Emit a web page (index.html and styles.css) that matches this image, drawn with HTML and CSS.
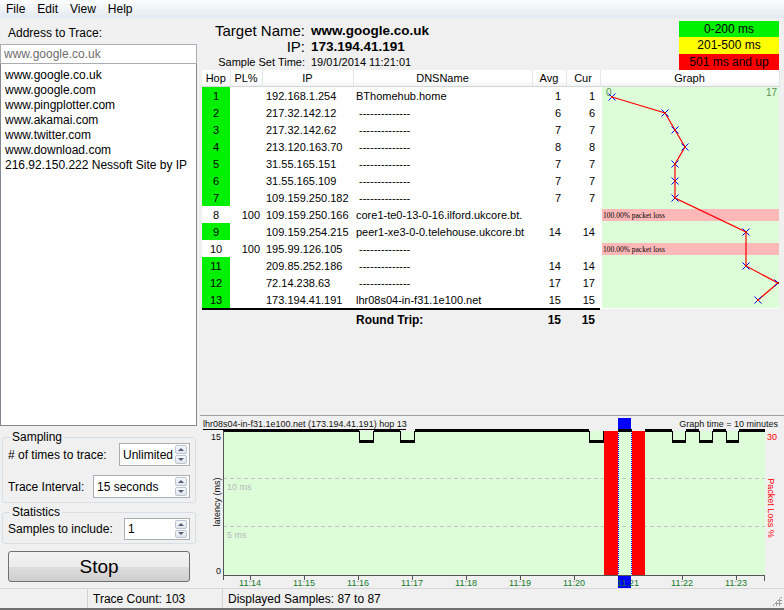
FILE: index.html
```html
<!DOCTYPE html>
<html lang="en">
<head>
    <meta charset="UTF-8" />
    <title>PingPlotter</title>
    <link rel="stylesheet" href="styles.css">
</head>
<body>
    <div class="app">
        <nav class="menubar">
            <span>File</span>
            <span>Edit</span>
            <span>View</span>
            <span>Help</span>
        </nav>

        <div class="main">
            <aside class="side">
                <div class="side-label">Address to Trace:</div>
                <input class="address" type="text" placeholder="www.google.co.uk" />
                <ul class="targets">
                    <li>www.google.co.uk</li>
                    <li>www.google.com</li>
                    <li>www.pingplotter.com</li>
                    <li>www.akamai.com</li>
                    <li>www.twitter.com</li>
                    <li>www.download.com</li>
                    <li>216.92.150.222 Nessoft Site by IP</li>
                </ul>

                <fieldset class="group">
                    <legend>Sampling</legend>
                    <div class="field">
                        <span># of times to trace:</span>
                        <div class="spin spin-times">
                            <span class="spin-text">Unlimited</span>
                            <span class="spin-btns"><span class="up"></span><span class="down"></span></span>
                        </div>
                    </div>
                    <div class="field">
                        <span>Trace Interval:</span>
                        <div class="spin spin-interval">
                            <span class="spin-text">15 seconds</span>
                            <span class="spin-btns"><span class="up"></span><span class="down"></span></span>
                        </div>
                    </div>
                </fieldset>

                <fieldset class="group group-stats">
                    <legend>Statistics</legend>
                    <div class="field field-small">
                        <span>Samples to include:</span>
                        <div class="spin spin-samples">
                            <span class="spin-text">1</span>
                            <span class="spin-btns"><span class="up"></span><span class="down"></span></span>
                        </div>
                    </div>
                </fieldset>

                <button class="stop" type="button">Stop</button>
            </aside>

            <section class="content">
                <div class="summary">
                    <div class="target">
                        <span class="t-label">Target Name:</span>
                        <span class="t-value">www.google.co.uk</span>
                        <span class="t-label">IP:</span>
                        <span class="t-value">173.194.41.191</span>
                        <span class="t-label t-small">Sample Set Time:</span>
                        <span class="t-small">19/01/2014 11:21:01</span>
                    </div>
                    <div class="levels">
                        <div class="lv-green">0-200 ms</div>
                        <div class="lv-yellow">201-500 ms</div>
                        <div class="lv-red">501 ms and up</div>
                    </div>
                </div>

                <table class="hops">
                    <colgroup>
                        <col class="c-hop"><col class="c-pl"><col class="c-ip"><col class="c-dns"><col class="c-avg"><col class="c-cur"><col class="c-graph">
                    </colgroup>
                    <thead>
                        <tr><th>Hop</th><th>PL%</th><th>IP</th><th>DNSName</th><th>Avg</th><th>Cur</th><th>Graph</th></tr>
                    </thead>
                    <tbody>
                        <tr>
                            <td class="hop ok">1</td><td class="pl"></td><td class="ip">192.168.1.254</td><td class="dns">BThomehub.home</td><td class="num">1</td><td class="num">1</td>
                            <td class="graph" rowspan="13">
                                <svg class="hopgraph" width="177" height="221" viewBox="602 87 177 221">
                                    <defs>
                                        <g id="mark">
                                            <path d="M-3.5 -3.5L3.5 3.5M-3.5 3.5L3.5 -3.5" stroke="#0000ff" stroke-width="1" />
                                            <rect x="-1" y="-1" width="2" height="2" fill="#d00000" />
                                        </g>
                                    </defs>
                                    <rect x="602" y="87" width="177" height="221" fill="#dcfdd8" />
                                    <rect x="602" y="209" width="177" height="12" fill="#ffb8b8" />
                                    <rect x="602" y="243" width="177" height="12" fill="#ffb8b8" />
                                    <text x="603" y="218" class="loss-text">100.00% packet loss</text>
                                    <text x="603" y="252" class="loss-text">100.00% packet loss</text>
                                    <text x="606" y="96" class="scale-text">0</text>
                                    <text x="777" y="96" class="scale-text" text-anchor="end">17</text>
                                    <polyline fill="none" stroke="#ff0000" stroke-width="1.2"
                                        points="612,97 665,113 675,130 685,147 675,164 675,181 675,198 746,232 746,266 778,283 758,300" />
                                    <use href="#mark" x="612" y="97" />
                                    <use href="#mark" x="665" y="113" />
                                    <use href="#mark" x="675" y="130" />
                                    <use href="#mark" x="685" y="147" />
                                    <use href="#mark" x="675" y="164" />
                                    <use href="#mark" x="675" y="181" />
                                    <use href="#mark" x="675" y="198" />
                                    <use href="#mark" x="746" y="232" />
                                    <use href="#mark" x="746" y="266" />
                                    <use href="#mark" x="778" y="283" />
                                    <use href="#mark" x="758" y="300" />
                                </svg>
                            </td>
                        </tr>
                        <tr><td class="hop ok">2</td><td class="pl"></td><td class="ip">217.32.142.12</td><td class="dns dash">--------------</td><td class="num">6</td><td class="num">6</td></tr>
                        <tr><td class="hop ok">3</td><td class="pl"></td><td class="ip">217.32.142.62</td><td class="dns dash">--------------</td><td class="num">7</td><td class="num">7</td></tr>
                        <tr><td class="hop ok">4</td><td class="pl"></td><td class="ip">213.120.163.70</td><td class="dns dash">--------------</td><td class="num">8</td><td class="num">8</td></tr>
                        <tr><td class="hop ok">5</td><td class="pl"></td><td class="ip">31.55.165.151</td><td class="dns dash">--------------</td><td class="num">7</td><td class="num">7</td></tr>
                        <tr><td class="hop ok">6</td><td class="pl"></td><td class="ip">31.55.165.109</td><td class="dns dash">--------------</td><td class="num">7</td><td class="num">7</td></tr>
                        <tr><td class="hop ok">7</td><td class="pl"></td><td class="ip">109.159.250.182</td><td class="dns dash">--------------</td><td class="num">7</td><td class="num">7</td></tr>
                        <tr><td class="hop">8</td><td class="pl">100</td><td class="ip">109.159.250.166</td><td class="dns">core1-te0-13-0-16.ilford.ukcore.bt.</td><td class="num"></td><td class="num"></td></tr>
                        <tr><td class="hop ok">9</td><td class="pl"></td><td class="ip">109.159.254.215</td><td class="dns">peer1-xe3-0-0.telehouse.ukcore.bt</td><td class="num">14</td><td class="num">14</td></tr>
                        <tr><td class="hop">10</td><td class="pl">100</td><td class="ip">195.99.126.105</td><td class="dns dash">--------------</td><td class="num"></td><td class="num"></td></tr>
                        <tr><td class="hop ok">11</td><td class="pl"></td><td class="ip">209.85.252.186</td><td class="dns dash">--------------</td><td class="num">14</td><td class="num">14</td></tr>
                        <tr><td class="hop ok">12</td><td class="pl"></td><td class="ip">72.14.238.63</td><td class="dns dash">--------------</td><td class="num">17</td><td class="num">17</td></tr>
                        <tr><td class="hop ok">13</td><td class="pl"></td><td class="ip">173.194.41.191</td><td class="dns">lhr08s04-in-f31.1e100.net</td><td class="num">15</td><td class="num">15</td></tr>
                    </tbody>
                    <tfoot>
                        <tr class="total">
                            <td></td><td></td><td></td><td class="dns">Round Trip:</td><td class="num">15</td><td class="num">15</td><td class="blank"></td>
                        </tr>
                    </tfoot>
                </table>

                <div class="spacer"></div>

                <div class="timeline">
                    <svg class="chart" width="584" height="172" viewBox="200 416 584 172">
                        <text x="203" y="427" class="c-text">lhr08s04-in-f31.1e100.net (173.194.41.191) hop 13</text>
                        <line x1="203" y1="429.5" x2="406" y2="429.5" stroke="#000" />
                        <rect x="618" y="418" width="13" height="12" fill="#0000ff" />
                        <text x="778" y="427" class="c-text" text-anchor="end">Graph time = 10 minutes</text>

                        <rect x="223" y="431" width="542" height="144" fill="#dcfdd8" />
                        <g stroke="#c4c4c4" stroke-dasharray="4 3">
                            <line x1="223" y1="478.5" x2="765" y2="478.5" />
                            <line x1="223" y1="526.5" x2="765" y2="526.5" />
                        </g>
                        <text x="227" y="490" class="c-grid">10 ms</text>
                        <text x="227" y="538" class="c-grid">5 ms</text>

                        <rect x="604" y="431" width="14" height="144" fill="#ff0000" />
                        <rect x="632" y="431" width="13" height="144" fill="#ff0000" />
                        <g stroke="#0000ff" stroke-dasharray="1 1">
                            <line x1="618.5" y1="431" x2="618.5" y2="575" />
                            <line x1="631.5" y1="431" x2="631.5" y2="575" />
                        </g>

                        <path fill="#000" d="M223 429h136v3h-136z M374 429h26v3h-26z M415 429h174v3h-174z M618 429h14v3h-14z M645 429h27v3h-27z M686 429h13v3h-13z M713 429h13v3h-13z M739 429h26v3h-26z M359 440h15v3h-15z M400 440h15v3h-15z M589 440h15v3h-15z M672 440h14v3h-14z M699 440h14v3h-14z M726 440h13v3h-13z" />
                        <path stroke="#000" d="M359.5 431V441 M373.5 431V441 M400.5 431V441 M414.5 431V441 M589.5 431V441 M603.5 431V441 M672.5 431V441 M685.5 431V441 M699.5 431V441 M712.5 431V441 M726.5 431V441 M738.5 431V441" />

                        <path stroke="#555" d="M223.5 431V580 M223 575.5H765 M764.5 575V581 M250.5 575V580 M304.5 575V580 M358.5 575V580 M412.5 575V580 M466.5 575V580 M520.5 575V580 M574.5 575V580 M628.5 575V580 M682.5 575V580 M736.5 575V580" />

                        <text x="221" y="440" class="c-text" text-anchor="end">15</text>
                        <text x="221" y="574" class="c-text" text-anchor="end">0</text>
                        <text x="767" y="440" class="c-text c-red">30</text>
                        <text class="c-text" text-anchor="middle" transform="translate(220 502) rotate(-90)">latency (ms)</text>
                        <text class="c-text c-red" text-anchor="middle" transform="translate(768 508) rotate(90)">Packet Loss %</text>

                        <rect x="618" y="576" width="13" height="12" fill="#0000ff" />
                        <g class="c-time" text-anchor="middle">
                            <text x="250" y="586">11:14</text>
                            <text x="304" y="586">11:15</text>
                            <text x="358" y="586">11:16</text>
                            <text x="412" y="586">11:17</text>
                            <text x="466" y="586">11:18</text>
                            <text x="520" y="586">11:19</text>
                            <text x="574" y="586">11:20</text>
                            <text x="628" y="586">11:21</text>
                            <text x="682" y="586">11:22</text>
                            <text x="736" y="586">11:23</text>
                        </g>
                    </svg>
                </div>
            </section>
        </div>

        <footer class="status">
            <div class="s-blank"></div>
            <div class="s-count">Trace Count: 103</div>
            <div class="s-shown">Displayed Samples: 87 to 87</div>
            <span class="grip"></span>
        </footer>
    </div>
</body>
</html>
```

FILE: styles.css
```css
* {
  box-sizing: border-box;
}

body {
  margin: 0;
  font-family: "Segoe UI", "Liberation Sans", Arial, sans-serif;
  font-size: 12px;
  color: #000;
  background-color: #f0f0f0;
}

.app {
  width: 784px;
  height: 610px;
  display: flex;
  flex-direction: column;
  overflow: hidden;
}

/* menu */
.menubar {
  height: 18px;
  display: flex;
  background: linear-gradient(#fcfdfe, #e3e9f1);
}

.menubar span {
  padding: 1px 6px 0;
  line-height: 17px;
}

.main {
  flex: 1;
  display: flex;
  min-height: 0;
}

/* left panel */
.side {
  width: 197px;
  display: flex;
  flex-direction: column;
}

.side-label {
  padding: 8px 8px 3px;
  line-height: 15px;
}

.address {
  width: 197px;
  height: 20px;
  margin: 0;
  padding: 0 3px;
  border: 1px solid #abadb3;
  font: inherit;
  background: #fff;
}

.address::placeholder {
  color: #6d6d6d;
}

.targets {
  flex: 1;
  list-style: none;
  margin: 0;
  padding: 4px 4px;
  background: #fff;
  border: 1px solid #828790;
  border-top: none;
}

.targets li {
  line-height: 15px;
  white-space: nowrap;
}

.group {
  margin: 4px 1px 0 2px;
  padding: 0 5px 4px 5px;
  border: 1px solid #d5dfe5;
  border-radius: 3px;
  min-width: 0;
}

.group legend {
  padding: 0 2px;
  margin-left: 2px;
  line-height: 15px;
}

.group-stats {
  margin-top: 2px;
  padding-bottom: 3px;
}

.field {
  display: flex;
  align-items: center;
  height: 23px;
  margin-top: 9px;
}

.field:first-of-type {
  margin-top: -2px;
}

.field-small {
  height: 22px;
}

.spin {
  margin-left: auto;
  height: 100%;
  display: flex;
  align-items: center;
  background: #fff;
  border: 1px solid #abadb3;
  padding-left: 3px;
}

.spin-times {
  width: 71px;
}

.spin-interval {
  width: 97px;
}

.spin-samples {
  width: 66px;
}

.spin-text {
  flex: 1;
  overflow: hidden;
  white-space: nowrap;
}

.spin-btns {
  width: 14px;
  align-self: stretch;
  display: flex;
  flex-direction: column;
  gap: 1px;
  padding: 1px 2px 1px 0;
}

.spin-btns span {
  flex: 1;
  display: flex;
  align-items: center;
  justify-content: center;
  border: 1px solid #bcc5d0;
  border-radius: 2px;
  background: linear-gradient(#f6f8fa, #dfe5ec);
}

.spin-btns span::after {
  content: "";
  border-left: 3px solid transparent;
  border-right: 3px solid transparent;
  border-bottom: 3px solid #4c607a;
}

.spin-btns span.down::after {
  border-bottom: 0;
  border-top: 3px solid #4c607a;
}

.stop {
  margin: 7px 7px 6px 8px;
  height: 31px;
  border: 1px solid #707070;
  border-radius: 3px;
  background: linear-gradient(#f2f2f2 0%, #ebebeb 50%, #dddddd 51%, #cfcfcf 100%);
  font: inherit;
  font-size: 19px;
  color: #000;
}

/* right panel */
.content {
  flex: 1;
  min-width: 0;
  margin-left: 3px;
  display: flex;
  flex-direction: column;
}

.summary {
  height: 52px;
  display: flex;
  justify-content: space-between;
}

.target {
  display: grid;
  grid-template-columns: 105px auto;
  column-gap: 6px;
  align-content: start;
  padding-top: 5px;
}

.t-label {
  text-align: right;
  font-size: 15px;
  line-height: 16px;
}

.t-value {
  font-weight: bold;
  font-size: 13.5px;
  line-height: 16px;
}

.target .t-small {
  font-size: 11px;
  line-height: 14px;
}

.levels {
  width: 100px;
  margin: 3px 5px 0 0;
  text-align: center;
}

.levels div {
  height: 16px;
  line-height: 16px;
}

.lv-green {
  background: #00f000;
}

.levels .lv-yellow {
  height: 17px;
  background: #ffff00;
}

.lv-red {
  background: #ff0000;
}

/* hop table */
.hops {
  width: 577px;
  margin-left: 2px;
  border-collapse: collapse;
  table-layout: fixed;
  font-size: 11px;
}

.c-hop { width: 28px; }
.c-pl { width: 32px; }
.c-ip { width: 91px; }
.c-dns { width: 179px; }
.c-avg { width: 34px; }
.c-cur { width: 34px; }
.c-graph { width: 179px; }

.hops th {
  height: 16px;
  padding: 0;
  font-weight: normal;
  line-height: 16px;
  background: linear-gradient(#ffffff 60%, #f2f3f5);
  border-right: 1px solid #e3e5e8;
  border-bottom: 1px solid #d5d5d5;
}

.hops td {
  height: 17px;
  padding: 2px 0 0;
  line-height: 15px;
  white-space: nowrap;
  overflow: hidden;
  background: #fff;
}

.hops .hop {
  text-align: center;
}

.hops .ok {
  background: #00f000;
}

.hops .pl {
  text-align: right;
  padding-right: 2px;
}

.hops .ip {
  padding-left: 4px;
}

.hops .dns {
  padding-left: 3px;
}

.hops .dash {
  padding-left: 6px;
}

.hops .num {
  text-align: right;
  padding-right: 5px;
}

.hops .graph {
  padding: 0 0 0 2px;
  vertical-align: top;
}

.hopgraph {
  display: block;
}

.loss-text {
  font-size: 7.5px;
  font-family: "Liberation Serif", serif;
}

.scale-text {
  font-size: 10px;
  fill: #5d8f55;
}

.hops .total td {
  height: 20px;
  padding-top: 1px;
  font-weight: bold;
  font-size: 12px;
  background: transparent;
  border-top: 2px solid #000;
}

.hops .total .blank {
  border-top: none;
}

.spacer {
  flex: 1;
}

/* bottom time graph */
.timeline {
  border-top: 1px solid #a0a0a0;
}

.chart {
  display: block;
}

.c-text {
  font-size: 9px;
  fill: #111;
}

.c-red {
  fill: #ff0000;
}

.c-grid {
  font-size: 9px;
  fill: #b8b8b8;
}

.c-time text {
  font-size: 9px;
  fill: #137a2c;
}

/* status bar */
.status {
  height: 22px;
  display: flex;
  position: relative;
  border-top: 1px solid #d7d7d7;
  border-bottom: 2px solid #6f6f6f;
  line-height: 19px;
}

.status div {
  border-right: 1px solid #d2d2d2;
  padding: 1px 0 0 5px;
}

.status .s-blank {
  width: 88px;
}

.status .s-count {
  width: 135px;
}

.status .s-shown {
  flex: 1;
  border-right: none;
}

.grip {
  position: absolute;
  right: 2px;
  bottom: 2px;
  width: 10px;
  height: 10px;
  background: radial-gradient(circle, #9a9a9a 1px, transparent 1.2px) 0 0 / 3px 3px;
  clip-path: polygon(100% 0, 100% 100%, 0 100%);
}
```
